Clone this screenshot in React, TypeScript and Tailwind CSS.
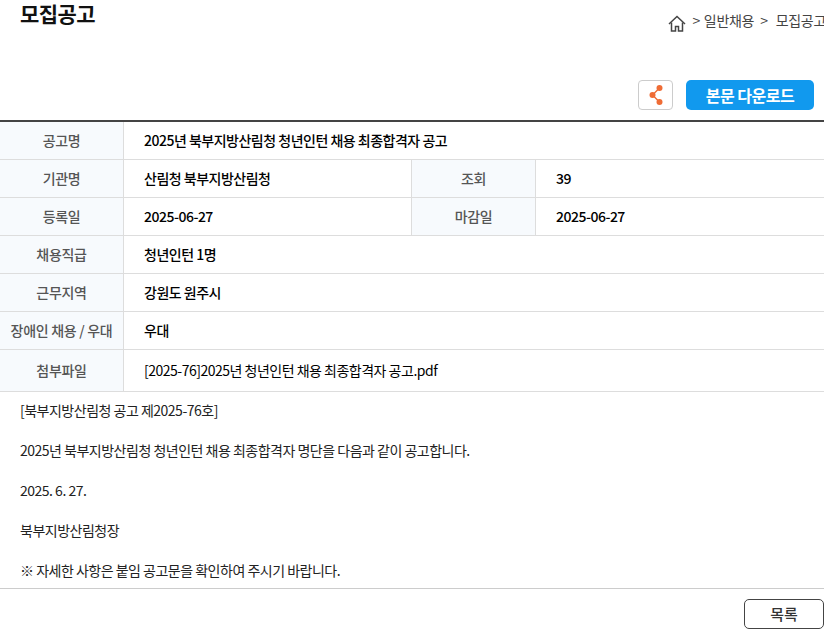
import React from "react";

const labelCls = "flex items-center justify-center bg-[#f7fafd] text-[14px] font-medium text-[#555] tracking-[-0.3px]";
const valueCls = "flex items-center px-5 text-[14px] font-medium text-black tracking-[-0.5px]";

const Row: React.FC<{label: string; value: string; h?: string; normal?: boolean}> = ({label, value, h = "h-[38px]", normal}) => (
    <div className={`flex border-b border-[#ddd] ${h}`}>
        <div className={`w-[124px] border-r border-[#ddd] ${labelCls}`}>{label}</div>
        <div className={`flex-1 ${valueCls} ${normal ? "font-normal text-[#222]" : ""}`}>{value}</div>
    </div>
);

const DoubleRow: React.FC<{a: string; b: string; c: string; d: string}> = ({a, b, c, d}) => (
    <div className="flex h-[38px] border-b border-[#ddd]">
        <div className={`w-[124px] border-r border-[#ddd] ${labelCls}`}>{a}</div>
        <div className={`w-[288px] border-r border-[#ddd] ${valueCls}`}>{b}</div>
        <div className={`w-[124px] border-r border-[#ddd] ${labelCls}`}>{c}</div>
        <div className={`flex-1 ${valueCls}`}>{d}</div>
    </div>
);

export default function App() {
    return (
        <div className="h-[629px] w-[824px] overflow-hidden bg-white font-['Noto_Sans_CJK_KR','Noto_Sans',sans-serif]">
            <div className="flex h-[80px] items-start justify-between">
                <h1 className="pl-5 text-[21px] leading-[26px] font-bold text-[#111] tracking-[-0.6px]">모집공고</h1>
                <div className="-mr-[2px] flex items-start whitespace-nowrap pt-[10px] text-[14px] leading-[20px] text-[#444] tracking-[-0.3px]">
                    <svg width="18" height="17" viewBox="0 0 18 17" fill="none" stroke="#444" strokeWidth="1.5" className="mt-[5px] mr-[6px]">
                        <path d="M1 9 9 1.5 17 9" />
                        <path d="M3.5 7.5v8.5h4v-4.5h3V16h4V7.5" />
                    </svg>
                    <span>&gt;</span>
                    <span className="ml-[4px]">일반채용</span>
                    <span className="ml-[6px]">&gt;</span>
                    <span className="ml-[8px]">모집공고</span>
                </div>
            </div>
            <div className="flex h-[40px] items-start justify-end gap-[13px] pr-[10px]">
                <button className="flex h-[30px] w-[35px] items-center justify-center rounded-[4px] border border-[#ccc] bg-white">
                    <svg width="16" height="22" viewBox="0 0 16 22" fill="#ef6c35" stroke="#ef6c35">
                        <path d="M11.5 4 4.5 11l7 7" fill="none" strokeWidth="1.4" />
                        <circle cx="11.5" cy="4" r="3" strokeWidth="0" />
                        <circle cx="4.5" cy="11" r="3" strokeWidth="0" />
                        <circle cx="11.5" cy="18" r="3" strokeWidth="0" />
                    </svg>
                </button>
                <button className="h-[30px] w-[128px] rounded-[5px] bg-[#1199ee] text-[16px] font-bold text-white tracking-[-0.5px]">
                    본문 다운로드
                </button>
            </div>
            <div className="border-t-2 border-[#444]">
                <Row label="공고명" value="2025년 북부지방산림청 청년인턴 채용 최종합격자 공고" />
                <DoubleRow a="기관명" b="산림청 북부지방산림청" c="조회" d="39" />
                <DoubleRow a="등록일" b="2025-06-27" c="마감일" d="2025-06-27" />
                <Row label="채용직급" value="청년인턴 1명" />
                <Row label="근무지역" value="강원도 원주시" />
                <Row label="장애인 채용 / 우대" value="우대" />
                <Row label="첨부파일" value="[2025-76]2025년 청년인턴 채용 최종합격자 공고.pdf" h="h-[42px]" normal />
            </div>
            <div className="h-[197px] border-b border-[#ccc] px-5 pt-[8px] text-[14px] leading-[20px] text-[#222] tracking-[-0.5px]">
                <p>[북부지방산림청 공고 제2025-76호]</p>
                <p className="mt-5">2025년 북부지방산림청 청년인턴 채용 최종합격자 명단을 다음과 같이 공고합니다.</p>
                <p className="mt-5">2025. 6. 27.</p>
                <p className="mt-5">북부지방산림청장</p>
                <p className="mt-5">※ 자세한 사항은 붙임 공고문을 확인하여 주시기 바랍니다.</p>
            </div>
            <div className="flex justify-end pt-[10px]">
                <button className="h-[30px] w-[80px] rounded-[5px] border border-[#444] bg-white text-[15px] font-medium text-[#333]">
                    목록
                </button>
            </div>
        </div>
    );
}
